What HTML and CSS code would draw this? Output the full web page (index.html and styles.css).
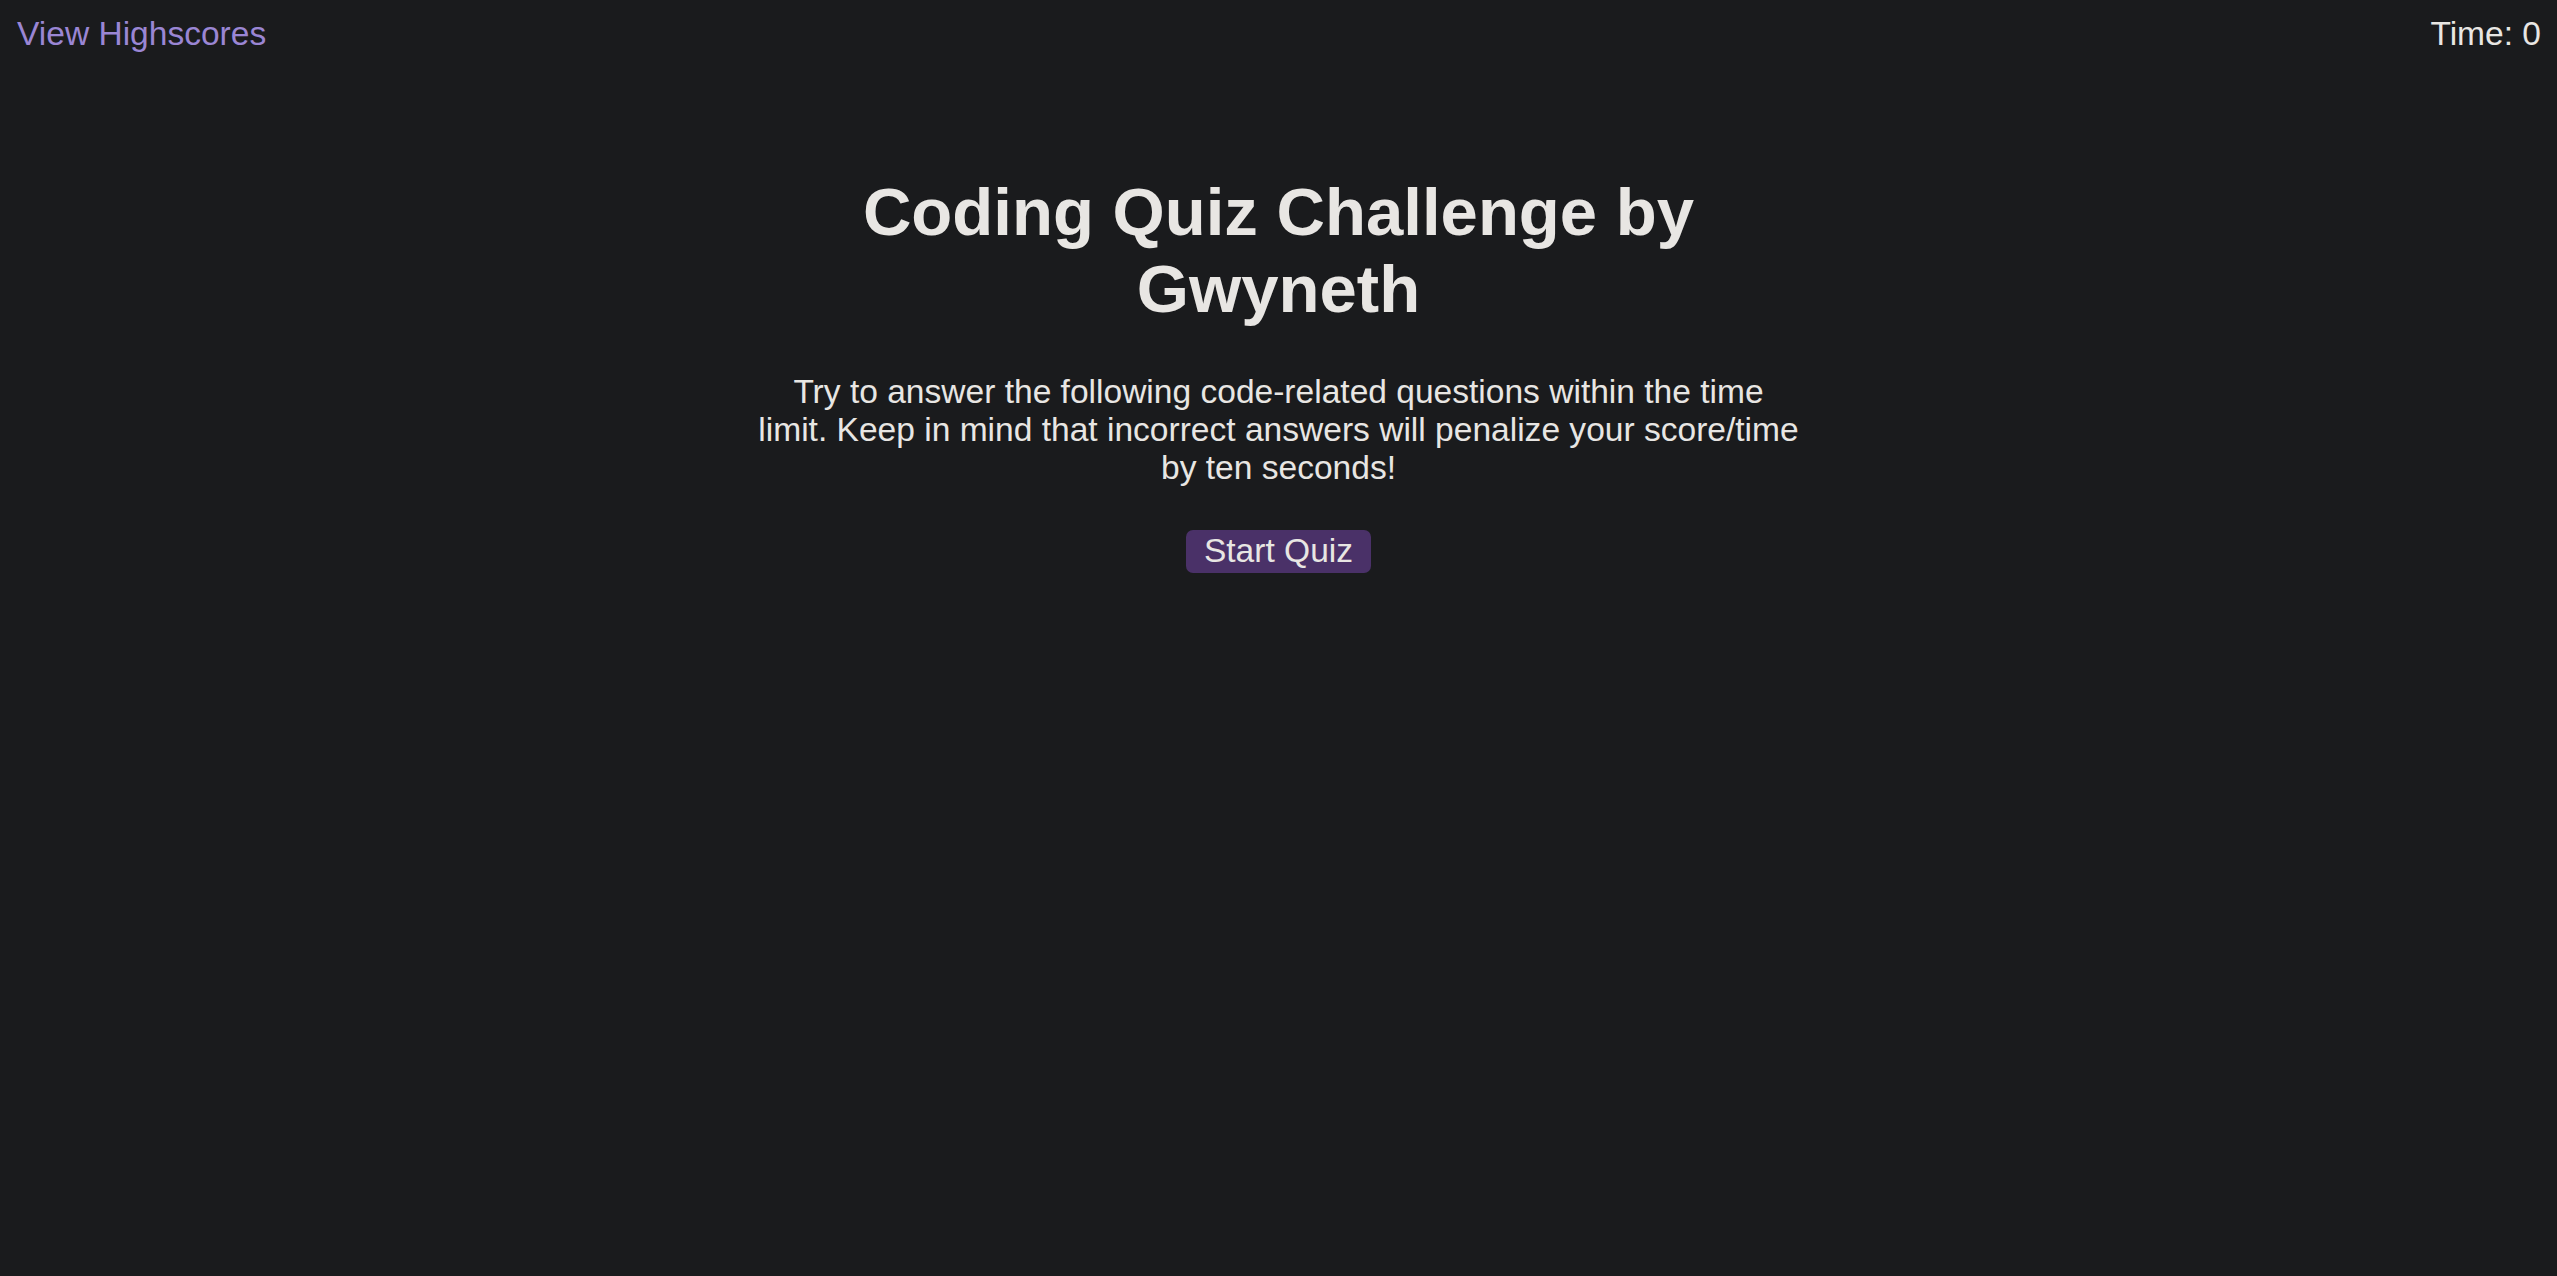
FILE: index.html
```html
<!DOCTYPE html>
<html lang="en">
<head>
<meta charset="utf-8">
<title>Coding Quiz Challenge</title>
<link rel="stylesheet" href="styles.css">
</head>
<body>
<header class="topbar">
  <a class="highscores" href="#">View Highscores</a>
  <div class="timer">Time: 0</div>
</header>
<main class="intro">
  <h1 class="title">Coding Quiz Challenge by Gwyneth</h1>
  <p class="desc">Try to answer the following code-related questions within the time limit. Keep in mind that incorrect answers will penalize your score/time by ten seconds!</p>
  <button class="start">Start Quiz</button>
</main>
</body>
</html>
```
FILE: styles.css
```css
html, body {
  margin: 0;
  padding: 0;
  background: #1a1b1d;
  color: #e8e6e3;
  font-family: "Liberation Sans", Arial, sans-serif;
  font-size: 33.55px;
  height: 100%;
}

.topbar {
  display: flex;
  justify-content: space-between;
  align-items: flex-start;
  padding: 15px 16px 0 17px;
}

.highscores {
  color: #9a86d4;
  text-decoration: none;
}

.timer {
  color: #e8e6e3;
}

.intro {
  width: 1045px;
  margin: 120px auto 0;
  text-align: center;
  display: flex;
  flex-direction: column;
  align-items: center;
}

.title {
  font-size: 67.1px;
  font-weight: bold;
  margin: 0 0 45.5px;
  color: #e8e6e3;
}

.desc {
  margin: 0;
}

.start {
  margin-top: 43px;
  font-family: "Liberation Sans", Arial, sans-serif;
  font-size: 33.55px;
  color: #e8e6e3;
  background: #4a3168;
  border: none;
  border-radius: 7px;
  padding: 2.8px 18px;
  line-height: normal;
  cursor: pointer;
}
```
